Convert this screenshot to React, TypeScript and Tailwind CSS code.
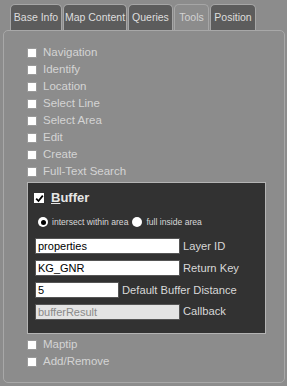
const tabs = [
  { label: "Base Info", w: "w-[52px]" },
  { label: "Map Content", w: "w-[64px]" },
  { label: "Queries", w: "w-[45px]" },
  { label: "Tools", w: "w-[35px]", active: true },
  { label: "Position", w: "w-[46px]" },
];

const topTools = [
  "Navigation",
  "Identify",
  "Location",
  "Select Line",
  "Select Area",
  "Edit",
  "Create",
  "Full-Text Search",
];

const fields = [
  { value: "properties", label: "Layer ID", w: "w-[145px]" },
  { value: "KG_GNR", label: "Return Key", w: "w-[145px]" },
  { value: "5", label: "Default Buffer Distance", w: "w-[84px]" },
  { value: "bufferResult", label: "Callback", w: "w-[145px]", disabled: true },
];

function Box() {
  return <span className="block h-[10px] w-[10px] shrink-0 border border-[#9a9a9a] bg-white" />;
}

function ToolRow({ label }: { label: string }) {
  return (
    <div className="flex h-[17px] items-center gap-[6px]">
      <Box />
      <span className="text-[11.5px] text-[#d4d4d4]">{label}</span>
    </div>
  );
}

function Radio({ on }: { on?: boolean }) {
  return (
    <span className="flex h-[10px] w-[10px] shrink-0 items-center justify-center rounded-full bg-white">
      {on && <span className="h-[5px] w-[5px] rounded-full bg-black" />}
    </span>
  );
}

export default function App() {
  return (
    <div
      className="h-[386px] w-[287px] overflow-hidden bg-[#8c8c8c]"
      style={{ fontFamily: '"Liberation Sans", Arial, sans-serif' }}
    >
      {/* Tabs */}
      <div className="flex gap-[1px] pl-[10px] pt-[4px]">
        {tabs.map((t) => (
          <div
            key={t.label}
            className={`${t.w} flex h-[26px] items-center justify-center whitespace-nowrap rounded-t-[5px] border border-b-0 border-[#a6a6a6] text-[10.5px] ${
              t.active ? "bg-[#8c8c8c] text-[#d2d2d2]" : "bg-[#5c5c5c] text-[#dedede]"
            }`}
          >
            {t.label}
          </div>
        ))}
      </div>

      {/* Panel */}
      <div className="ml-[3px] h-[353px] w-[282px] rounded-[5px] border border-[#a8a8a8] pl-[23px] pt-[13px]">
        {topTools.map((l) => (
          <ToolRow key={l} label={l} />
        ))}

        <div className="mt-[2px] h-[152px] w-[239px] border border-[#b4b4b4] bg-[#323232] pl-[6px] pt-[7px]">
          <div className="flex h-[16px] items-center gap-[7px]">
            <span className="flex h-[10px] w-[10px] items-center justify-center bg-white">
              <svg width="9" height="9" viewBox="0 0 9 9">
                <path d="M1.2 4.6 L3.5 7 L7.8 1.6" fill="none" stroke="#000" strokeWidth="1.8" />
              </svg>
            </span>
            <span className="text-[13px] font-bold text-[#e6e6e6]">
              <span className="underline">B</span>uffer
            </span>
          </div>

          <div className="mt-[9px] flex h-[14px] items-center pl-[4px] text-[8.6px] text-[#d8d8d8]">
            <Radio on />
            <span className="ml-[4px]">intersect within area</span>
            <span className="ml-[4px]">
              <Radio />
            </span>
            <span className="ml-[4px]">full inside area</span>
          </div>

          <div className="mt-[9px] flex flex-col gap-[5px] pl-[1px]">
            {fields.map((f) => (
              <div key={f.label} className="flex items-center gap-[3px]">
                <div
                  className={`${f.w} flex h-[16px] items-center border border-[#555] px-[2px] text-[11px] ${
                    f.disabled ? "bg-[#e4e4e4] text-[#8a8a8a]" : "bg-white text-black"
                  }`}
                >
                  {f.value}
                </div>
                <span className="text-[11.2px] text-[#d8d8d8]">{f.label}</span>
              </div>
            ))}
          </div>
        </div>

        <div className="mt-[2px]">
          <ToolRow label="Maptip" />
          <ToolRow label="Add/Remove" />
        </div>
      </div>
    </div>
  );
}
